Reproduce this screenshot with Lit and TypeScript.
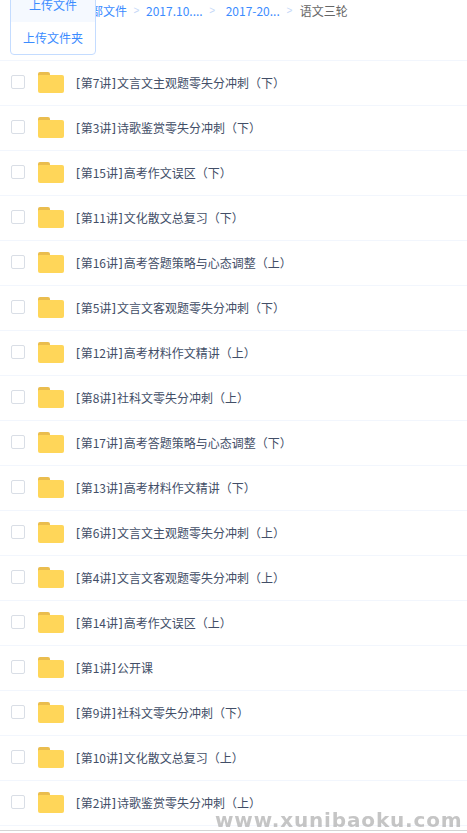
import { LitElement, html, css } from "lit";
import { customElement } from "lit/decorators.js";

const ROWS = [
  "第7讲",
  "第3讲",
  "第15讲",
  "第11讲",
  "第16讲",
  "第5讲",
  "第12讲",
  "第8讲",
  "第17讲",
  "第13讲",
  "第6讲",
  "第4讲",
  "第14讲",
  "第1讲",
  "第9讲",
  "第10讲",
  "第2讲",
];
const TITLES = [
  "文言文主观题零失分冲刺（下）",
  "诗歌鉴赏零失分冲刺（下）",
  "高考作文误区（下）",
  "文化散文总复习（下）",
  "高考答题策略与心态调整（上）",
  "文言文客观题零失分冲刺（下）",
  "高考材料作文精讲（上）",
  "社科文零失分冲刺（上）",
  "高考答题策略与心态调整（下）",
  "高考材料作文精讲（下）",
  "文言文主观题零失分冲刺（上）",
  "文言文客观题零失分冲刺（上）",
  "高考作文误区（上）",
  "公开课",
  "社科文零失分冲刺（下）",
  "文化散文总复习（上）",
  "诗歌鉴赏零失分冲刺（上）",
];

@customElement("app-root")
export class AppRoot extends LitElement {
  static styles = css`
    :host {
      display: block;
      position: relative;
      width: 467px;
      height: 833px;
      overflow: hidden;
      background: #fff;
      font-family: "Noto Sans CJK SC", "Liberation Sans", sans-serif;
      font-size: 12px;
      color: #424e67;
    }
    .crumbs {
      display: flex;
      align-items: center;
      height: 20px;
      padding: 1px 0 0 79px;
      box-sizing: border-box;
      color: #3b8cff;
      line-height: 20px;
      white-space: nowrap;
    }
    .sep {
      width: 19px;
      text-align: center;
      color: #c5d8f7;
      font-size: 10px;
      font-family: "Liberation Sans", sans-serif;
    }
    .sep.wide { margin-right: 4px; }
    .cur { color: #666; margin-left: 1px; }
    .list { margin-top: 40px; border-bottom: 1px solid #f2f6fd; }
    .row {
      display: flex;
      align-items: center;
      height: 44px;
      border-top: 1px solid #f2f6fd;
    }
    .check {
      width: 12px;
      height: 12px;
      margin: -2px 0 0 11px;
      border: 1px solid #d9dee6;
      border-radius: 2px;
      flex: none;
    }
    .folder { width: 26px; height: 21px; margin: -2px 0 0 13px; flex: none; display: block; }
    .name { margin-left: 12px; white-space: nowrap; margin-top: -1px; }
    .br { font-family: "DejaVu Sans", sans-serif; }
    .br.end { margin-right: 1px; }
    .menu {
      position: absolute;
      left: 10px;
      top: -12px;
      width: 84px;
      height: 65px;
      background: #fff;
      border: 1px solid #c4dcff;
      border-radius: 4px;
      color: #3b8cff;
      text-align: center;
      line-height: 32px;
    }
    .menu div { height: 33px; }
    .menu .hi { background: #f5f9ff; }
    .foot {
      position: absolute;
      left: 0;
      right: 0;
      top: 830px;
      height: 3px;
      background: #fff;
      border-top: 1px solid #d4d4d4;
    }
    .mark {
      position: absolute;
      left: 215px;
      top: 808px;
      font: bold 20px/24px "DejaVu Sans", sans-serif;
      letter-spacing: 0.85px;
      color: rgba(170, 170, 170, 0.68);
      white-space: nowrap;
      filter: blur(0.4px);
    }
  `;

  render() {
    return html`
      <div class="crumbs">
        <span>全部文件</span><span class="sep">&gt;</span>
        <span>2017.10....</span><span class="sep wide">&gt;</span>
        <span>2017-20...</span><span class="sep">&gt;</span>
        <span class="cur">语文三轮</span>
      </div>
      <div class="list">
        ${ROWS.map(
          (r, i) => html`<div class="row">
            <span class="check"></span>
            <svg class="folder" viewBox="0 0 26 21">
              <path d="M0 2a2 2 0 0 1 2-2h8a2 2 0 0 1 2 2v3H0z" fill="#eabd4e" />
              <path d="M0 4a1 1 0 0 1 1-1h23a2 2 0 0 1 2 2v14a2 2 0 0 1-2 2H2a2 2 0 0 1-2-2z" fill="#ffd659" />
            </svg>
            <span class="name"><span class="br">[</span>${r}<span class="br end">]</span>${TITLES[i]}</span>
          </div>`
        )}
      </div>
      <div class="menu">
        <div class="hi">上传文件</div>
        <div>上传文件夹</div>
      </div>
      <div class="foot"></div>
      <div class="mark">www.xunibaoku.com</div>
    `;
  }
}
